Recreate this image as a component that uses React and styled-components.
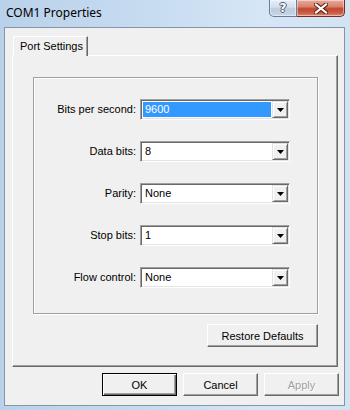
import React from "react";
import styled, { createGlobalStyle } from "styled-components";

const Global = createGlobalStyle`
  html, body { margin: 0; padding: 0; }
  body { width: 350px; height: 410px; overflow: hidden; background: #c4d9ef; }
  * { box-sizing: border-box; }
`;

const Window = styled.div`
  width: 350px;
  height: 410px;
  display: flex;
  flex-direction: column;
  padding: 0 5px 4px 4px;
  background: linear-gradient(90deg, #b9d1ea 0%, #c6dbf0 40%, #d6e6f6 75%, #d2e3f4 100%);
  font-family: "Liberation Sans", Arial, sans-serif;
`;

const TitleBar = styled.div`
  height: 27px;
  flex: none;
  display: flex;
  justify-content: space-between;
  align-items: flex-start;
`;

const Title = styled.div`
  font-family: "Noto Sans", "Open Sans", sans-serif;
  font-size: 12px;
  line-height: 17px;
  padding: 4px 0 0 2px;
  color: #000;
`;

const Caption = styled.div`
  display: flex;
`;

const CapButton = styled.div`
  width: ${(p) => p.$w}px;
  height: 17px;
  display: flex;
  align-items: center;
  justify-content: center;
  border: 1px solid ${(p) => (p.$close ? "#7a2a1c" : "#6a7c93")};
  border-top: none;
  border-left: ${(p) => (p.$close ? "none" : undefined)};
  border-radius: ${(p) => (p.$close ? "0 0 5px 0" : "0 0 0 5px")};
  background: ${(p) =>
    p.$close
      ? "linear-gradient(#e8aa9c 0%, #d98470 40%, #c4472f 55%, #cc5a42 80%, #d98a76 100%)"
      : "linear-gradient(#e6eef8 0%, #d3dfec 45%, #bccbdd 55%, #c8d7e8 100%)"};
  box-shadow: inset 0 0 0 1px rgba(255, 255, 255, 0.45);
`;

const HelpGlyph = styled.span`
  font-family: "DejaVu Sans", sans-serif;
  font-weight: bold;
  font-size: 12px;
  line-height: 12px;
  color: #fff;
  text-shadow: -1px 0 #4a5a70, 1px 0 #4a5a70, 0 -1px #4a5a70, 0 1px #4a5a70;
`;

const Client = styled.div`
  flex: 1;
  display: flex;
  flex-direction: column;
  border: 1px solid #8495aa;
  background: #f0f0f0;
  padding: 8px 5px 9px 7px;
`;

const TabStrip = styled.div`
  display: flex;
  height: 19px;
  padding-left: 1px;
  position: relative;
  z-index: 1;
`;

const Tab = styled.div`
  width: 75px;
  height: 20px;
  padding: 3px 0 0 6px;
  font-size: 11px;
  line-height: 13px;
  color: #000;
  background: #f0f0f0;
  border-top: 1px solid #fff;
  border-left: 1px solid #fff;
  border-right: 1px solid #696969;
  border-top-left-radius: 2px;
  box-shadow: inset -1px 0 0 #a0a0a0;
`;

const Panel = styled.div`
  margin-right: 1px;
  display: flex;
  flex-direction: column;
  align-items: flex-end;
  padding: 21px 19px 19px 20px;
  border-top: 1px solid #fff;
  border-left: 1px solid #fff;
  border-right: 1px solid #696969;
  border-bottom: 1px solid #696969;
  box-shadow: inset -1px -1px 0 #a0a0a0;
`;

const Group = styled.div`
  align-self: stretch;
  height: 237px;
  border: 1px solid #a0a0a0;
  box-shadow: 1px 1px 0 #fff, inset 1px 1px 0 #fff;
  display: grid;
  grid-template-columns: 102px 150px;
  column-gap: 4px;
  row-gap: 21px;
  align-content: start;
  padding: 21px 0 0 0;
`;

const Label = styled.label`
  font-size: 11px;
  line-height: 21px;
  text-align: right;
  color: #000;
  white-space: nowrap;
`;

const Combo = styled.div`
  height: 21px;
  display: flex;
  background: #fff;
  border-top: 1px solid #a0a0a0;
  border-left: 1px solid #a0a0a0;
  border-right: 1px solid #fff;
  border-bottom: 1px solid #fff;
  box-shadow: inset 1px 1px 0 #696969, inset -1px -1px 0 #e3e3e3;
  padding: 1px 1px 1px 1px;
`;

const ComboText = styled.div`
  flex: 1;
  margin: 1px 1px 1px 1px;
  padding-left: 2px;
  font-size: 11px;
  line-height: 15px;
  color: ${(p) => (p.$selected ? "#fff" : "#000")};
  background: ${(p) => (p.$selected ? "#3399ff" : "transparent")};
`;

const DropButton = styled.div`
  width: 16px;
  height: 17px;
  display: flex;
  align-items: center;
  justify-content: center;
  background: #f0f0f0;
  border-top: 1px solid #e3e3e3;
  border-left: 1px solid #e3e3e3;
  border-right: 1px solid #696969;
  border-bottom: 1px solid #696969;
  box-shadow: inset 1px 1px 0 #fff, inset -1px -1px 0 #a0a0a0;
`;

const Button = styled.button`
  width: ${(p) => p.$w || 75}px;
  height: 23px;
  padding: 0;
  font-family: "Liberation Sans", Arial, sans-serif;
  font-size: 11px;
  color: ${(p) => (p.disabled ? "#a0a0a0" : "#000")};
  text-shadow: ${(p) => (p.disabled ? "1px 1px 0 #fff" : "none")};
  background: #f0f0f0;
  border-top: 1px solid ${(p) => (p.$default ? "#000" : "#fff")};
  border-left: 1px solid ${(p) => (p.$default ? "#000" : "#fff")};
  border-right: 1px solid ${(p) => (p.$default ? "#000" : "#696969")};
  border-bottom: 1px solid ${(p) => (p.$default ? "#000" : "#696969")};
  box-shadow: ${(p) =>
    p.$default
      ? "inset 1px 1px 0 #fff, inset -1px -1px 0 #696969, inset -2px -2px 0 #a0a0a0"
      : "inset -1px -1px 0 #a0a0a0"};
  border-radius: 0;
`;

const RestoreButton = styled(Button)`
  margin-top: 10px;
`;

const Footer = styled.div`
  display: flex;
  justify-content: flex-end;
  gap: 6px;
  margin-top: 6px;
`;

const Arrow = () => (
  <svg width="7" height="4" viewBox="0 0 7 4">
    <path d="M0 0h7L3.5 4z" fill="#000" />
  </svg>
);

const CloseIcon = () => (
  <svg width="14" height="11" viewBox="0 0 14 11">
    <path
      d="M2 1.5L12 9.5M12 1.5L2 9.5"
      stroke="#5a1e14"
      strokeWidth="4.2"
      strokeLinecap="square"
    />
    <path
      d="M2 1.5L12 9.5M12 1.5L2 9.5"
      stroke="#fff"
      strokeWidth="2.2"
      strokeLinecap="square"
    />
  </svg>
);

const rows = [
  { label: "Bits per second:", value: "9600", selected: true },
  { label: "Data bits:", value: "8" },
  { label: "Parity:", value: "None" },
  { label: "Stop bits:", value: "1" },
  { label: "Flow control:", value: "None" },
];

export default function App() {
  return (
    <>
      <Global />
      <Window>
        <TitleBar>
          <Title>COM1 Properties</Title>
          <Caption>
            <CapButton $w={28}>
              <HelpGlyph>?</HelpGlyph>
            </CapButton>
            <CapButton $w={48} $close>
              <CloseIcon />
            </CapButton>
          </Caption>
        </TitleBar>
        <Client>
          <TabStrip>
            <Tab>Port Settings</Tab>
          </TabStrip>
          <Panel>
            <Group>
              {rows.map((r) => (
                <React.Fragment key={r.label}>
                  <Label>{r.label}</Label>
                  <Combo>
                    <ComboText $selected={r.selected}>{r.value}</ComboText>
                    <DropButton>
                      <Arrow />
                    </DropButton>
                  </Combo>
                </React.Fragment>
              ))}
            </Group>
            <RestoreButton $w={111}>Restore Defaults</RestoreButton>
          </Panel>
          <Footer>
            <Button $default>OK</Button>
            <Button>Cancel</Button>
            <Button disabled>Apply</Button>
          </Footer>
        </Client>
      </Window>
    </>
  );
}
